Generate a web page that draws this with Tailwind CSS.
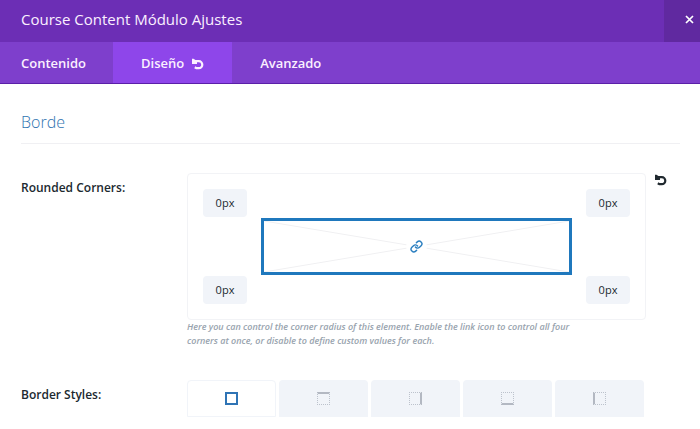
<!DOCTYPE html>
<html lang="es">

<head>
  <meta charset="UTF-8" />
  <meta name="viewport" content="width=device-width, initial-scale=1" />
  <script src="https://cdn.jsdelivr.net/npm/@tailwindcss/browser@4"></script>
  <title>Course Content Módulo Ajustes</title>
</head>

<body class="bg-white font-['Open_Sans',sans-serif] text-[#20292f]">
  <header class="flex items-stretch h-[42px] bg-[#6c2eb5] text-white">
    <h1 class="flex-1 flex items-center pl-[21px] pb-1 text-[15px] font-medium text-[#fbf0ff]">Course Content Módulo Ajustes</h1>
    <button type="button" aria-label="Cerrar" class="w-9 pl-[14px] pb-1 flex items-center justify-center bg-[#6029a0]">
      <svg class="w-[9px] h-[9px]" viewBox="0 0 9 9" fill="none" stroke="currentColor" stroke-width="1.700">
        <path d="M1 1l7 7M8 1L1 8" />
      </svg>
    </button>
  </header>

  <nav class="flex h-[42px] bg-[#7e3fcc] border-b border-[#5a1fa8] text-[13px] font-semibold text-[#fbf0ff]">
    <a href="#contenido" class="flex items-center pt-0.5 pl-[21px] pr-[27px]">Contenido</a>
    <a href="#diseno" class="flex items-center gap-2 pt-0.5 px-7 bg-[#8e46ea]">Diseño
      <svg class="w-3 h-3" viewBox="0 0 12 12" fill="none" stroke="currentColor" stroke-width="2.200">
        <path d="M1 3.200h5.800a3.500 3.500 0 0 1 0 7h-2.400l-1.600-1" />
        <path d="M0 .8L1.500 .8L5 3V6H0z" fill="currentColor" stroke="none" />
      </svg>
    </a>
    <a href="#avanzado" class="flex items-center pt-0.5 px-7">Avanzado</a>
  </nav>

  <main class="pl-[21px] pr-5 pt-6">
    <h2 class="pb-[7px] border-b border-[#f0f0f3] text-base leading-7 font-light text-[#2f73b0]">Borde</h2>

    <!-- Rounded corners -->
    <section class="flex pt-[29px]">
      <h3 class="w-[166px] shrink-0 pt-[5px] text-xs leading-5 font-semibold">Rounded Corners:</h3>
      <div class="flex-1">
        <div class="grid grid-cols-[44px_1fr_44px] grid-rows-[28px_59px_28px] gap-x-[14px] p-[15px] border border-[#f2f3f6] rounded-sm text-[11px]">
          <input type="text" value="0px" aria-label="Top left" class="w-full bg-[#f1f4f9] rounded-sm text-center" />
          <input type="text" value="0px" aria-label="Top right" class="col-start-3 w-full bg-[#f1f4f9] rounded-sm text-center" />
          <div class="col-start-2 row-start-2 my-px grid border-[3px] border-[#1f78bd]">
            <svg class="col-start-1 row-start-1 w-full h-[51px]" viewBox="0 0 305 51" preserveAspectRatio="none" stroke="#f0f0f2" stroke-width="1">
              <path d="M0 0L305 51M0 51L305 0" />
            </svg>
            <button type="button" aria-label="Link corners" class="col-start-1 row-start-1 place-self-center p-1 bg-white rounded-full text-[#2b7fc0]">
              <svg class="w-[13px] h-[13px]" viewBox="0 0 24 24" fill="none" stroke="currentColor" stroke-width="2.600" stroke-linecap="round" stroke-linejoin="round">
                <path d="M10 13a5 5 0 0 0 7.540.54l3-3a5 5 0 0 0-7.070-7.070l-1.720 1.710" />
                <path d="M14 11a5 5 0 0 0-7.540-.54l-3 3a5 5 0 0 0 7.070 7.070l1.710-1.710" />
              </svg>
            </button>
          </div>
          <input type="text" value="0px" aria-label="Bottom left" class="row-start-3 w-full bg-[#f1f4f9] rounded-sm text-center" />
          <input type="text" value="0px" aria-label="Bottom right" class="col-start-3 row-start-3 w-full bg-[#f1f4f9] rounded-sm text-center" />
        </div>
        <p class="max-w-[400px] text-[9px] leading-[14px] italic font-semibold text-[#98a3ae]">Here you can control the corner radius of this element. Enable the link icon to control all four corners at once, or disable to define custom values for each.</p>
      </div>
      <div class="w-[34px] shrink-0 pl-[9px]">
        <button type="button" aria-label="Reset" class="block pt-px">
          <svg class="w-3 h-3" viewBox="0 0 12 12" fill="none" stroke="currentColor" stroke-width="2.200">
            <path d="M1 3.200h5.800a3.500 3.500 0 0 1 0 7h-2.400l-1.600-1" />
            <path d="M0 .8L1.500 .8L5 3V6H0z" fill="currentColor" stroke="none" />
          </svg>
        </button>
      </div>
    </section>

    <!-- Border styles -->
    <section class="flex pt-8 pb-3">
      <h3 class="w-[166px] shrink-0 pt-[5px] text-xs leading-5 font-semibold">Border Styles:</h3>
      <div class="flex-1 grid grid-cols-5 gap-[3px] mr-9 text-[#bcc2cc]">
        <button type="button" aria-label="All" class="h-[37px] flex items-center justify-center bg-white border border-[#f1f4f9] rounded-t-sm">
          <span class="w-[13px] h-[13px] border-2 border-[#2f74b5]"></span>
        </button>
        <button type="button" aria-label="Top" class="h-[37px] flex items-center justify-center bg-[#f1f4f9] rounded-t-sm">
          <span class="w-[13px] h-[13px] border border-dotted border-t-2 border-t-[#b3b8c2] [border-top-style:solid]"></span>
        </button>
        <button type="button" aria-label="Right" class="h-[37px] flex items-center justify-center bg-[#f1f4f9] rounded-t-sm">
          <span class="w-[13px] h-[13px] border border-dotted border-r-2 border-r-[#b3b8c2] [border-right-style:solid]"></span>
        </button>
        <button type="button" aria-label="Bottom" class="h-[37px] flex items-center justify-center bg-[#f1f4f9] rounded-t-sm">
          <span class="w-[13px] h-[13px] border border-dotted border-b-2 border-b-[#b3b8c2] [border-bottom-style:solid]"></span>
        </button>
        <button type="button" aria-label="Left" class="h-[37px] flex items-center justify-center bg-[#f1f4f9] rounded-t-sm">
          <span class="w-[13px] h-[13px] border border-dotted border-l-2 border-l-[#b3b8c2] [border-left-style:solid]"></span>
        </button>
      </div>
    </section>
  </main>
</body>

</html>
